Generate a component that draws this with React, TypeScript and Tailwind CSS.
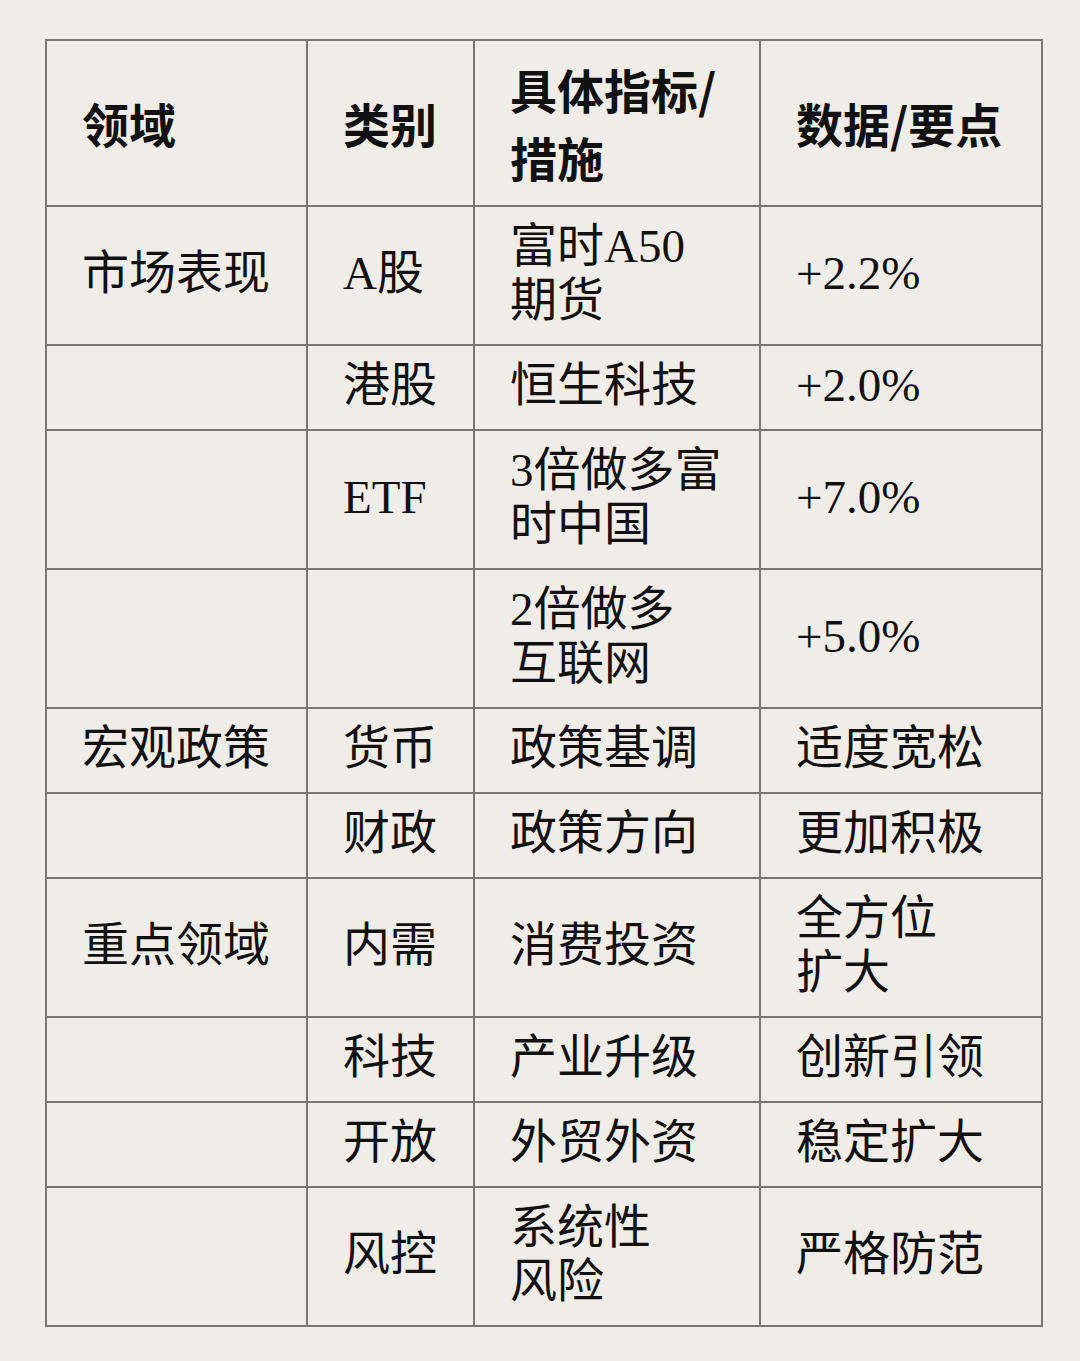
import React from "react";

const rows: React.ReactNode[][] = [
  ["市场表现", "A股", <>富时A50<br />期货</>, "+2.2%"],
  ["", "港股", "恒生科技", "+2.0%"],
  ["", "ETF", <>3倍做多富<br />时中国</>, "+7.0%"],
  ["", "", <>2倍做多<br />互联网</>, "+5.0%"],
  ["宏观政策", "货币", "政策基调", "适度宽松"],
  ["", "财政", "政策方向", "更加积极"],
  ["重点领域", "内需", "消费投资", <>全方位<br />扩大</>],
  ["", "科技", "产业升级", "创新引领"],
  ["", "开放", "外贸外资", "稳定扩大"],
  ["", "风控", <>系统性<br />风险</>, "严格防范"],
];

const headers: React.ReactNode[] = ["领域", "类别", <>具体指标/<br />措施</>, "数据/要点"];

export default function App() {
  return (
    <div className="min-h-[1361px] w-[1080px] bg-[#f0ede8] pt-[39px]">
      <div className="ml-[45px] grid w-[998px] grid-cols-[261px_167px_286px_282px] border-l-2 border-t-2 border-[#7a7672] text-[#111111]">
        {headers.map((h, i) => (
          <div
            key={`h${i}`}
            className="flex min-h-[166px] items-center whitespace-nowrap border-b-2 border-r-2 border-[#7a7672] py-[14px] pl-[35px] text-[47px] font-bold leading-[68px] [font-family:'Noto_Sans_CJK_SC','Noto_Sans',sans-serif]"
          >
            <div>{h}</div>
          </div>
        ))}
        {rows.map((r, ri) =>
          r.map((c, ci) => (
            <div
              key={`r${ri}c${ci}`}
              className="flex items-center whitespace-nowrap border-b-2 border-r-2 border-[#7a7672] pb-[17.5px] pl-[35px] pt-[11.5px] text-[47px] font-normal leading-[54px] [font-family:'Liberation_Serif','Noto_Sans_CJK_SC',serif]"
            >
              <div>{c}</div>
            </div>
          ))
        )}
      </div>
    </div>
  );
}
